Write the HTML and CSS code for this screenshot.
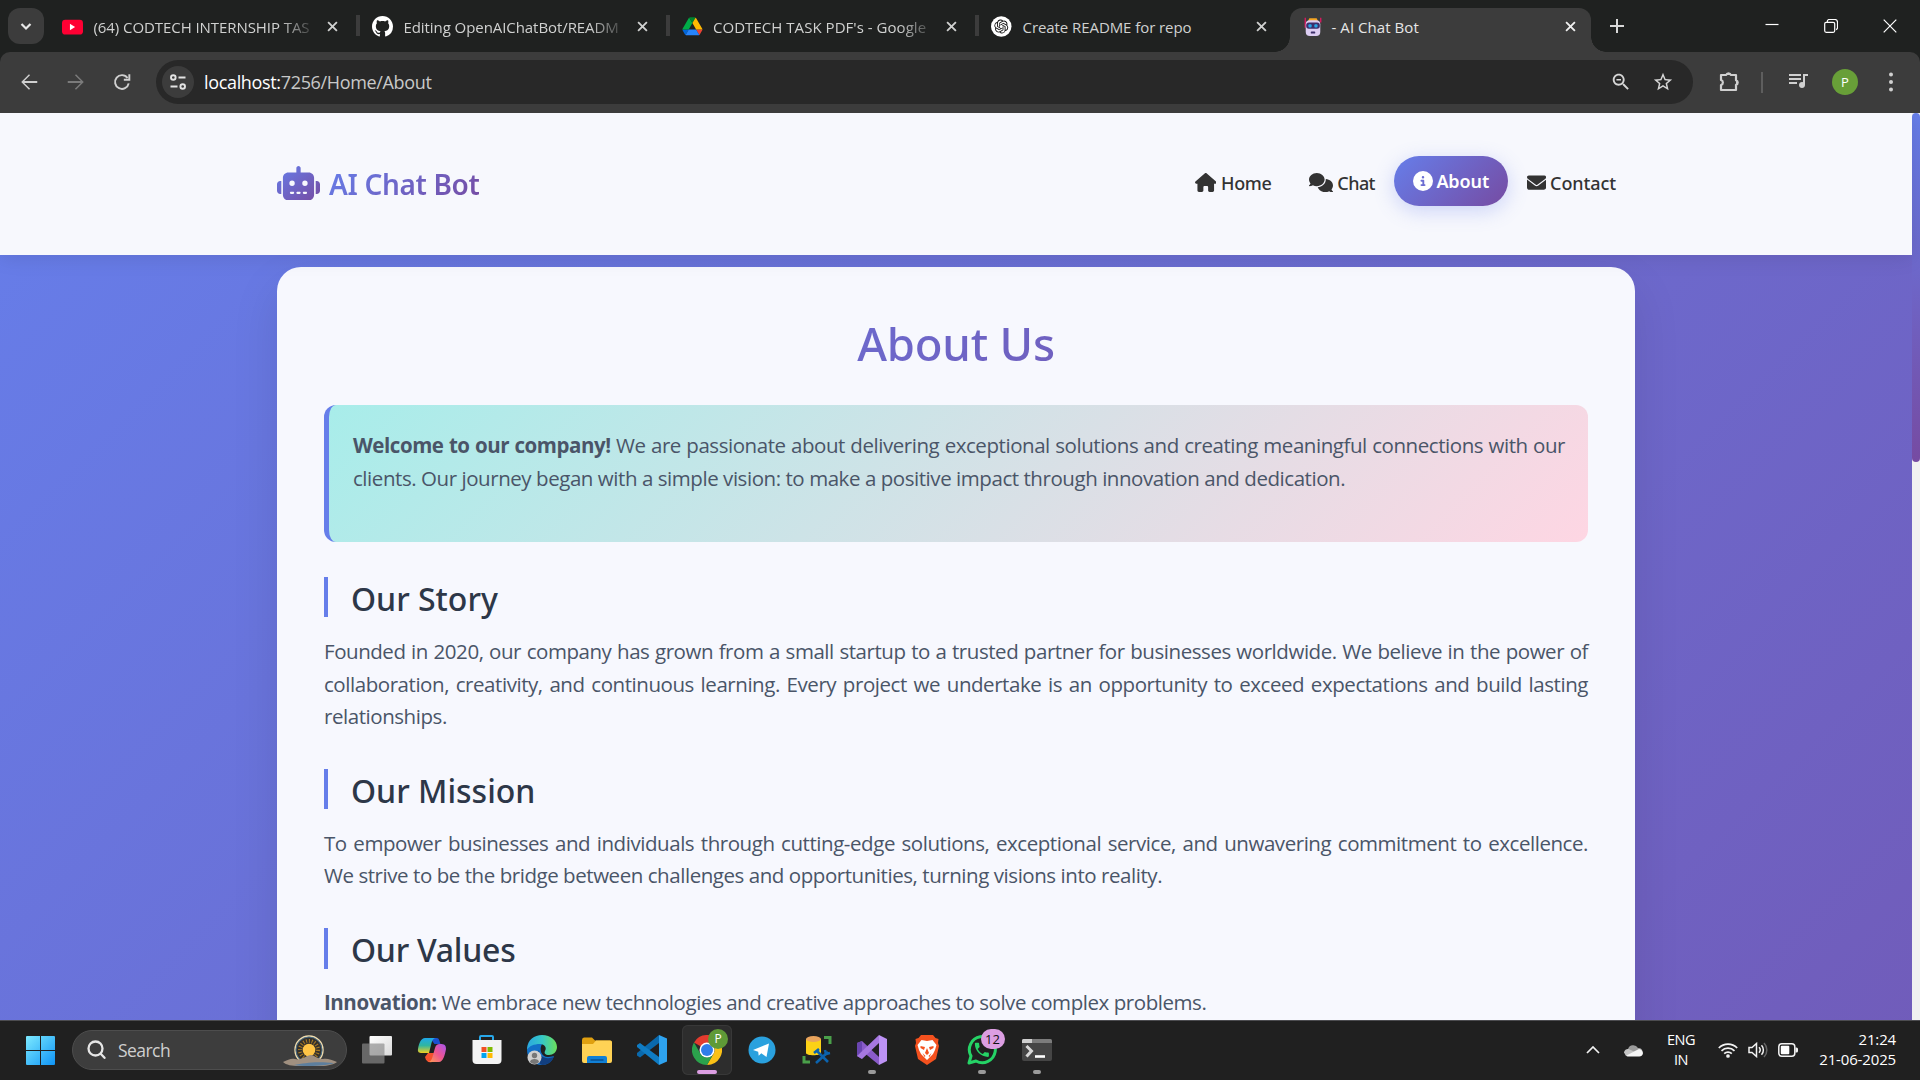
FILE: index.html
```html
<!DOCTYPE html>
<html lang="en">
<head>
<meta charset="utf-8">
<title>- AI Chat Bot</title>
<link rel="stylesheet" href="styles.css">
</head>
<body>
<div class="screen">

<header class="tabstrip">
  <button class="tab-search"><svg width="36" height="36" viewBox="0 0 36 36"><path d="M13.500 16l4.500 4.500 4.500-4.500" fill="none" stroke="#e8e8e8" stroke-width="2.200"/></svg></button>
  <div class="tabs">
    <div class="tab">
      <svg class="fav" viewBox="0 0 22 22"><rect x="0" y="4" width="22" height="15.500" rx="3.500" fill="#ff0033"/><path d="M8.300 8.200l5.400 3.300-5.400 3.300z" fill="#fff"/></svg>
      <span class="tab-title fade">(64) CODTECH INTERNSHIP TAS</span>
      <svg class="close" viewBox="0 0 12 12"><path d="M1.200 1.200l9.600 9.600M10.800 1.200l-9.600 9.600"/></svg>
    </div>
    <div class="tab">
      <svg class="fav" viewBox="0 0 16 16"><path fill="#fff" d="M8 0C3.580 0 0 3.580 0 8c0 3.540 2.290 6.530 5.470 7.590.4.070.55-.17.55-.38 0-.19-.01-.82-.01-1.490-2.010.37-2.530-.49-2.690-.94-.09-.23-.48-.94-.82-1.130-.28-.15-.68-.52-.01-.53.63-.01 1.080.58 1.230.82.72 1.210 1.870.87 2.330.66.07-.52.28-.87.51-1.070-1.780-.2-3.640-.89-3.640-3.950 0-.87.31-1.590.82-2.150-.08-.2-.36-1.020.08-2.120 0 0 .67-.21 2.200.82.64-.18 1.320-.27 2-.27s1.360.09 2 .27c1.530-1.040 2.200-.82 2.200-.82.44 1.100.16 1.920.08 2.120.51.56.82 1.270.82 2.150 0 3.070-1.870 3.750-3.650 3.950.29.25.54.73.54 1.480 0 1.070-.01 1.930-.01 2.200 0 .21.15.46.55.38A8.010 8.010 0 0 0 16 8c0-4.420-3.580-8-8-8z"/></svg>
      <span class="tab-title fade">Editing OpenAIChatBot/READM</span>
      <svg class="close" viewBox="0 0 12 12"><path d="M1.200 1.200l9.600 9.600M10.800 1.200l-9.600 9.600"/></svg>
    </div>
    <div class="tab third">
      <svg class="fav" viewBox="-2 -6 92 92"><path d="m6.600 66.850 3.850 6.650c.8 1.400 1.950 2.500 3.300 3.300l13.750-23.800h-27.500c0 1.550.4 3.100 1.200 4.500z" fill="#0066da"/><path d="m43.650 25-13.750-23.800c-1.350.8-2.500 1.900-3.300 3.300l-25.400 44a9.060 9.060 0 0 0 -1.200 4.500h27.500z" fill="#00ac47"/><path d="m73.550 76.800c1.350-.8 2.500-1.900 3.300-3.300l1.600-2.750 7.650-13.250c.8-1.400 1.200-2.950 1.200-4.500h-27.502l5.852 11.500z" fill="#ea4335"/><path d="m43.650 25 13.750-23.800c-1.350-.8-2.900-1.200-4.500-1.200h-18.500c-1.600 0-3.150.45-4.500 1.200z" fill="#00832d"/><path d="m59.800 53h-32.300l-13.750 23.800c1.350.8 2.900 1.200 4.500 1.200h50.800c1.600 0 3.150-.45 4.500-1.200z" fill="#2684fc"/><path d="m73.400 26.500-12.700-22c-.8-1.400-1.950-2.500-3.300-3.300l-13.750 23.800 16.150 28h27.450c0-1.550-.4-3.100-1.200-4.500z" fill="#ffba00"/></svg>
      <span class="tab-title fade drive">CODTECH TASK PDF's - Google</span>
      <svg class="close" viewBox="0 0 12 12"><path d="M1.200 1.200l9.600 9.600M10.800 1.200l-9.600 9.600"/></svg>
    </div>
    <div class="tab last">
      <svg class="fav" viewBox="0 0 42 42"><circle cx="20.500" cy="21" r="20.500" fill="#fff"/><g transform="translate(6.500 7) scale(1.170)"><path fill="#111" d="M22.282 9.821a5.985 5.985 0 0 0-.516-4.911 6.046 6.046 0 0 0-6.510-2.900A6.065 6.065 0 0 0 4.981 4.182a5.985 5.985 0 0 0-3.998 2.900 6.046 6.046 0 0 0 .743 7.097 5.980 5.980 0 0 0 .511 4.911 6.051 6.051 0 0 0 6.515 2.900A5.985 5.985 0 0 0 13.260 24a6.056 6.056 0 0 0 5.772-4.206 5.989 5.989 0 0 0 3.998-2.900 6.056 6.056 0 0 0-.748-7.073zm-9.022 12.608a4.476 4.476 0 0 1-2.876-1.041l.142-.080 4.778-2.758a.795.795 0 0 0 .393-.681v-6.737l2.020 1.169a.071.071 0 0 1 .038.052v5.583a4.504 4.504 0 0 1-4.495 4.493zm-9.661-4.125a4.471 4.471 0 0 1-.535-3.014l.142.085 4.783 2.758a.771.771 0 0 0 .781 0l5.843-3.369v2.332a.080.080 0 0 1-.033.062L9.740 19.950a4.499 4.499 0 0 1-6.141-1.646zM2.341 7.896a4.485 4.485 0 0 1 2.366-1.973V11.600a.766.766 0 0 0 .388.677l5.814 3.354-2.020 1.169a.076.076 0 0 1-.071 0l-4.830-2.787A4.504 4.504 0 0 1 2.341 7.872zm16.596 3.856L13.104 8.364 15.119 7.200a.076.076 0 0 1 .071 0l4.830 2.791a4.494 4.494 0 0 1-.677 8.104v-5.677a.790.790 0 0 0-.407-.667zm2.011-3.023l-.142-.085-4.774-2.782a.776.776 0 0 0-.785 0L9.409 9.230V6.897a.066.066 0 0 1 .028-.062l4.830-2.787a4.499 4.499 0 0 1 6.680 4.660zM8.307 12.863l-2.020-1.164a.080.080 0 0 1-.038-.057V6.074a4.499 4.499 0 0 1 7.376-3.454l-.142.081L8.704 5.459a.795.795 0 0 0-.393.681zm1.098-2.365l2.602-1.500 2.607 1.500v2.999l-2.597 1.500-2.607-1.500Z"/></g></svg>
      <span class="tab-title">Create README for repo</span>
      <svg class="close" viewBox="0 0 12 12"><path d="M1.200 1.200l9.600 9.600M10.800 1.200l-9.600 9.600"/></svg>
    </div>
    <div class="tab active">
      <svg class="fav" viewBox="0 0 22 22"><path d="M2.500 1.500v11M19.500 1.500v5" stroke="#d81b60" stroke-width="1.500"/><path d="M7 2h8l1.500 3h-11z" fill="#f5a623"/><rect x="3" y="4" width="16" height="17.500" rx="4.500" fill="#dccdf2"/><rect x="3.500" y="6.500" width="15" height="7" rx="3" fill="#3d2f6b"/><rect x="6" y="8.500" width="3.500" height="3.500" rx="1" fill="#29a6e6"/><rect x="12.500" y="8.500" width="3.500" height="3.500" rx="1" fill="#29a6e6"/><rect x="8.500" y="16.500" width="5" height="2.300" rx="1" fill="#3d2f6b"/></svg>
      <span class="tab-title">- AI Chat Bot</span>
      <svg class="close" viewBox="0 0 12 12"><path d="M1.200 1.200l9.600 9.600M10.800 1.200l-9.600 9.600"/></svg>
    </div>
  </div>
  <svg class="new-tab" viewBox="0 0 14 14"><path d="M7 0v14M0 7h14"/></svg>
  <div class="window-buttons">
    <svg viewBox="0 0 14 14"><path d="M.5 5.500h13"/></svg>
    <svg viewBox="0 0 14 14"><rect x=".7" y="3.300" width="10" height="10" rx="1.500"/><path d="M3.300 3.300V2.500a2 2 0 0 1 2-2h5.500a2.700 2.700 0 0 1 2.700 2.700v5.500a2 2 0 0 1-1.500 1.900"/></svg>
    <svg viewBox="0 0 14 14"><path d="M.7.700l12.600 12.600M13.300.700L.7 13.300"/></svg>
  </div>
</header>

<nav class="toolbar">
  <div class="nav-buttons">
    <svg viewBox="0 0 24 24"><path fill="#d0d0d0" d="M21 11H6.800l6.300-6.300L12 3.500l-8.500 8.500 8.500 8.500 1.200-1.200L6.800 13H21z"/></svg>
    <svg viewBox="0 0 24 24"><path fill="#7b7b7b" d="M3 11h14.200l-6.300-6.300L12 3.500l8.500 8.500-8.500 8.500-1.200-1.200 6.400-6.300H3z"/></svg>
    <svg viewBox="0 0 24 24"><path fill="none" stroke="#d0d0d0" stroke-width="2.100" d="M19.300 13.500A7.500 7.500 0 1 1 18 7.600M20 3.500v6h-6"/></svg>
  </div>
  <div class="omnibox">
    <span class="site-info"><svg width="18" height="18" viewBox="0 0 18 18" fill="none" stroke="#e3e3e3" stroke-width="1.900"><circle cx="4.300" cy="4.500" r="2.300"/><path d="M9.500 4.500h7M1.500 13.500h7"/><circle cx="13.700" cy="13.500" r="2.300"/></svg></span>
    <span class="url"><b>localhost:</b>7256/Home/About</span>
    <svg class="ob-icon" viewBox="0 0 24 24"><path d="M15.500 14h-.79l-.28-.27C15.410 12.590 16 11.110 16 9.500 16 5.910 13.090 3 9.500 3S3 5.910 3 9.500 5.910 16 9.500 16c1.610 0 3.090-.59 4.230-1.570l.27.28v.79l5 4.990L20.490 19l-4.990-5zm-6 0C7.010 14 5 11.990 5 9.500S7.010 5 9.500 5 14 7.010 14 9.500 11.990 14 9.500 14zM7 8.700h5v1.600H7z"/></svg>
    <svg class="ob-icon" viewBox="0 0 24 24"><path d="M22 9.240l-7.190-.62L12 2 9.190 8.630 2 9.240l5.460 4.730L5.820 21 12 17.270 18.180 21l-1.630-7.030L22 9.240zM12 15.400l-3.760 2.270 1-4.280-3.320-2.880 4.380-.38L12 6.100l1.710 4.040 4.380.38-3.320 2.880 1 4.280L12 15.400z"/></svg>
  </div>
  <svg class="ext" width="24" height="24" viewBox="0 0 24 24"><path d="M4 5h5.200a2.400 2.400 0 0 1 4.600 0H19v5.200a2.400 2.400 0 0 1 0 4.600V20H4v-5a2.600 2.600 0 0 0 0-5z" fill="none" stroke="#d0d0d0" stroke-width="2.200" stroke-linejoin="round"/><path d="M9.500 5a2 2 0 0 1 4 0zM19 10.500a2 2 0 0 1 0 4z" fill="#d0d0d0"/></svg>
  <i class="bar-sep"></i>
  <svg class="queue" width="24" height="24" viewBox="0 0 24 24"><path fill="#d0d0d0" d="M15 4H3v1.900h12zm0 4H3v1.900h12zM3 13.900h8V12H3zM17 4v8.200c-.3-.1-.6-.2-1-.2-1.700 0-3 1.300-3 3s1.300 3 3 3 3-1.300 3-3V6h3V4z"/></svg>
  <span class="avatar">P</span>
  <svg class="dots" width="6" height="20" viewBox="0 0 6 20"><circle cx="3" cy="2.500" r="2"/><circle cx="3" cy="10" r="2"/><circle cx="3" cy="17.500" r="2"/></svg>
</nav>

<div class="viewport">
  <div class="page">
    <div class="site-header">
      <div class="container">
        <div class="logo">
          <svg width="43" height="34.400" viewBox="0 0 640 512"><defs><linearGradient id="lg" x1="0" y1="0" x2="1" y2="1"><stop offset="0" stop-color="#667eea"/><stop offset="1" stop-color="#764ba2"/></linearGradient></defs><path fill="url(#lg)" d="M320 0c17.700 0 32 14.300 32 32V96H472c44.200 0 80 35.800 80 80V432c0 44.200-35.800 80-80 80H168c-44.200 0-80-35.800-80-80V176c0-44.200 35.800-80 80-80H288V32c0-17.700 14.300-32 32-32zM208 384c-8.800 0-16 7.200-16 16s7.200 16 16 16h32c8.800 0 16-7.200 16-16s-7.200-16-16-16H208zm96 0c-8.800 0-16 7.200-16 16s7.200 16 16 16h32c8.800 0 16-7.200 16-16s-7.200-16-16-16H304zm96 0c-8.800 0-16 7.200-16 16s7.200 16 16 16h32c8.800 0 16-7.200 16-16s-7.200-16-16-16H400zM264 256a40 40 0 1 0 -80 0 40 40 0 1 0 80 0zm152 40a40 40 0 1 0 0-80 40 40 0 1 0 0 80zM48 224H64V416H48c-26.500 0-48-21.500-48-48V272c0-26.500 21.500-48 48-48zm544 0c26.500 0 48 21.500 48 48v96c0 26.500-21.500 48-48 48H576V224h16z"/></svg>
          <span>AI Chat Bot</span>
        </div>
        <ul class="menu">
          <li class="home"><svg width="21.500" height="19" viewBox="0 0 576 512"><path d="M575.800 255.500c0 18-15 32.100-32 32.100h-32l.7 160.200c0 2.700-.2 5.400-.5 8.100V472c0 22.100-17.900 40-40 40H456c-1.100 0-2.200 0-3.300-.1c-1.400 .1-2.800 .1-4.200 .1H416 392c-22.100 0-40-17.900-40-40V448 384c0-17.700-14.300-32-32-32H256c-17.700 0-32 14.300-32 32v64 24c0 22.100-17.900 40-40 40H160 128.100c-1.500 0-3-.1-4.500-.2c-1.200 .1-2.400 .2-3.600 .2H104c-22.100 0-40-17.900-40-40V360c0-.9 0-1.900 .1-2.800V287.600H32c-18 0-32-14-32-32.100c0-9 3-17 10-24L266.400 8c7-7 15-8 22-8s15 2 21 7L564.800 231.500c8 7 12 15 11 24z"/></svg>Home</li>
          <li class="chat"><svg width="24" height="19.200" viewBox="0 0 640 512"><path d="M208 352c114.900 0 208-78.800 208-176S322.900 0 208 0S0 78.800 0 176c0 38.600 14.700 74.300 39.600 103.400c-3.500 9.400-8.700 17.700-14.200 24.700c-4.800 6.200-9.700 11-13.300 14.300c-1.800 1.600-3.300 2.900-4.300 3.700c-.5 .4-.9 .7-1.100 .8l-.2 .2C1 327.200-1.400 334.400 .8 340.900S9.100 352 16 352c21.800 0 43.800-5.600 62.100-12.500c9.200-3.500 17.800-7.400 25.300-11.400C134.100 343.300 169.800 352 208 352zM448 176c0 112.300-99.100 196.900-216.500 207C255.800 457.400 336.400 512 432 512c38.200 0 73.900-8.700 104.700-23.900c7.500 4 16 7.900 25.200 11.400c18.300 6.900 40.300 12.500 62.100 12.500c6.900 0 13.100-4.500 15.200-11.100c2.100-6.600-.2-13.800-5.800-17.900l-.2-.2c-.2-.2-.6-.4-1.100-.8c-1-.8-2.500-2-4.300-3.700c-3.600-3.300-8.500-8.100-13.300-14.300c-5.500-7-10.700-15.400-14.200-24.700c24.900-29 39.600-64.700 39.600-103.400c0-92.800-84.900-168.900-192.600-175.500c.4 5.100 .6 10.300 .6 15.500z"/></svg>Chat</li>
          <li class="current"><svg width="20" height="20" viewBox="0 0 512 512"><path d="M256 512A256 256 0 1 0 256 0a256 256 0 1 0 0 512zM216 336h24V272H216c-13.300 0-24-10.700-24-24s10.700-24 24-24h48c13.300 0 24 10.700 24 24v88h8c13.300 0 24 10.700 24 24s-10.700 24-24 24H216c-13.300 0-24-10.700-24-24s10.700-24 24-24zm40-208a32 32 0 1 1 0 64 32 32 0 1 1 0-64z"/></svg>About</li>
          <li class="contact"><svg width="19.200" height="19.200" viewBox="0 0 512 512"><path d="M48 64C21.500 64 0 85.500 0 112c0 15.100 7.100 29.300 19.200 38.400L236.800 313.600c11.400 8.500 27 8.500 38.400 0L492.800 150.400c12.100-9.100 19.200-23.300 19.200-38.400c0-26.500-21.500-48-48-48H48zM0 176V384c0 35.300 28.700 64 64 64H448c35.300 0 64-28.700 64-64V176L294.400 339.200c-22.800 17.100-54 17.100-76.800 0L0 176z"/></svg>Contact</li>
        </ul>
      </div>
    </div>
    <main class="card">
      <h1>About Us</h1>
      <div class="intro">
        <p class="full"><strong>Welcome to our company!</strong> We are passionate about delivering exceptional solutions and creating meaningful connections with our</p>
        <p>clients. Our journey began with a simple vision: to make a positive impact through innovation and dedication.</p>
      </div>
      <h2>Our Story</h2>
      <div class="para">
        <p class="full">Founded in 2020, our company has grown from a small startup to a trusted partner for businesses worldwide. We believe in the power of</p>
        <p class="full">collaboration, creativity, and continuous learning. Every project we undertake is an opportunity to exceed expectations and build lasting</p>
        <p>relationships.</p>
      </div>
      <h2>Our Mission</h2>
      <div class="para">
        <p class="full">To empower businesses and individuals through cutting-edge solutions, exceptional service, and unwavering commitment to excellence.</p>
        <p>We strive to be the bridge between challenges and opportunities, turning visions into reality.</p>
      </div>
      <h2 class="values">Our Values</h2>
      <div class="para">
        <p><strong>Innovation:</strong> We embrace new technologies and creative approaches to solve complex problems.</p>
      </div>
    </main>
  </div>
  <div class="scrollbar"><i></i></div>
</div>

<footer class="taskbar">
  <svg class="start" width="29" height="29" viewBox="0 0 29 29"><defs><linearGradient id="w" gradientUnits="userSpaceOnUse" x1="0" y1="0" x2="29" y2="29"><stop offset="0" stop-color="#7deaff"/><stop offset="1" stop-color="#0f94f5"/></linearGradient></defs><path fill="url(#w)" d="M0 1a1 1 0 0 1 1-1h13v14H0zM15 0h13a1 1 0 0 1 1 1v13H15zM0 15h14v14H1a1 1 0 0 1-1-1zM15 15h14v13a1 1 0 0 1-1 1H15z"/></svg>
  <div class="search">
    <svg width="19" height="20" viewBox="0 0 19 20" fill="none" stroke="#e6e6e6" stroke-width="2.300" stroke-linecap="round"><circle cx="8.500" cy="8.500" r="7"/><path d="M13.700 13.800l3.800 4"/></svg>
    <span>Search</span>
    <svg class="weather" width="56" height="34" viewBox="0 0 56 34"><circle cx="27" cy="17" r="14" fill="#33302c" stroke="#f0dcae" stroke-width="1.400"/><circle cx="27" cy="17" r="13" fill="none" stroke="#4f7fa0" stroke-width=".8"/><circle cx="27" cy="17" r="9" fill="none" stroke="#a87a24" stroke-width="4" stroke-dasharray="1 1.800"/><circle cx="27" cy="17" r="6.300" fill="#ffc445"/><path d="M1 29c5-2 8-4 12-3s4 0 8-1 6-5 11-2c3 2 6 3 9 3 4-1 9 1 14 3-2 2-9 4-16 4H17C10 33 4 32 1 29z" fill="#a09080"/><path d="M12 32c10-2 22-4 40-2-6 3-30 4-40 2z" fill="#5d7f9e"/></svg>
  </div>
  <div class="apps">
    <div class="app"><svg width="30" height="30" viewBox="0 0 30 30"><defs><linearGradient id="tv" x2="1" y2="1"><stop offset="0" stop-color="#fff"/><stop offset="1" stop-color="#d9d9d9"/></linearGradient></defs><rect x="7.500" y="1" width="22.500" height="19.500" rx="1" fill="url(#tv)"/><rect x="0" y="8.500" width="22.500" height="20" rx="1" fill="#8a8a8a" fill-opacity=".68"/></svg></div>
    <div class="app"><svg width="30" height="30" viewBox="0 0 30 30"><defs><linearGradient id="c1" x1="0" y1="0" x2="0" y2="1"><stop offset="0" stop-color="#1ea8ea"/><stop offset=".5" stop-color="#30b6a0"/><stop offset="1" stop-color="#f0cf20"/></linearGradient><linearGradient id="c2" x1="1" y1="0" x2="0" y2="1"><stop offset="0" stop-color="#a855f0"/><stop offset=".5" stop-color="#ee5590"/><stop offset="1" stop-color="#ffa04d"/></linearGradient></defs><path d="M13 3h7c2 0 2.500 3 3.500 6h-6z" fill="#1a4fd0"/><path d="M8 3h11c-3 0-4 3-5 7l-2 8H5c-3 0-4.500-1-4-4C2 8 4 3 8 3z" fill="url(#c1)"/><path d="M8 22l3-4h6l-2 9c-4 1-6-1-7-5z" fill="#f5512e"/><path d="M23 9c4.500 0 6 1 6 5-1 6-3 13-7 13H11c3 0 4-3 5-7l2-7c1-3 2-4 5-4z" fill="url(#c2)"/></svg></div>
    <div class="app"><svg width="30" height="30" viewBox="0 0 30 30"><path d="M8 7V2q0-1 1-1h11q1 0 1 1v5" fill="none" stroke="#28a8ea" stroke-width="2"/><path d="M.5 5h29v20q0 4-4 4H4.500q-4 0-4-4z" fill="#f3f3f3"/><path d="M9.500 12h5v5h-5z" fill="#f25022"/><path d="M15.500 12h5v5h-5z" fill="#7fba00"/><path d="M9.500 18h5v5h-5z" fill="#00a4ef"/><path d="M15.500 18h5v5h-5z" fill="#ffb900"/></svg></div>
    <div class="app"><svg width="30" height="30" viewBox="0 0 30 30"><defs><linearGradient id="e1"><stop offset="0" stop-color="#2aa7e0"/><stop offset=".5" stop-color="#35c8c8"/><stop offset="1" stop-color="#6ce05a"/></linearGradient></defs><path d="M0 15C2 8 10 7 15 9c-3 5-1 13 6 13 3 0 5-1 6-1-2 6-7 9-12 9C6 30 0 23 0 15z" fill="#1270c8"/><path d="M0 13C1 5 7 0 15 0c9 0 15 6 15 12 0 5-4 8-8 8-4 0-5-2-4-4 2-3 0-7-5-7C7 9 2 11 0 15z" fill="url(#e1)"/><path d="M12 15c0 7 7 10 15 7-3 6-7 8-12 8-6-2-6-10-3-15z" fill="#123f80"/><circle cx="7.500" cy="22.500" r="7" fill="#cfcfcf"/><circle cx="7.500" cy="20.500" r="2.700" fill="#777"/><path d="M3 27c0-4 9-4 9 0-2 2.500-7 2.500-9 0z" fill="#777"/></svg></div>
    <div class="app"><svg width="30" height="30" viewBox="0 0 30 30"><path d="M0 5q0-2.500 2-2.500h8l3 3h15q2 0 2 2V14H0z" fill="#e0a010"/><path d="M0 9h11l3-3.500h14q2 0 2 2V26q0 2-2 2H2q-2 0-2-2z" fill="#ffd255"/><path d="M5 28v-5q0-2 2-2h16q2 0 2 2v5z" fill="#1180d6"/><path d="M8.500 25h13" stroke="#0a4c8c" stroke-width="1.400"/></svg></div>
    <div class="app"><svg width="30" height="30" viewBox="0 0 30 30"><path d="M22 0v8L3 22.500 0 20.500V18z" fill="#0a69ac"/><path d="M0 12v-2l3-2 19 14v8z" fill="#0f7cc4"/><path d="M22 0l8 3.500v23L22 30z" fill="#2ea3f0"/></svg></div>
    <div class="app running focused"><svg width="30" height="30" viewBox="0 0 30 30"><path d="M15 15L2 7.500A15 15 0 0 1 28 7.500H15z" fill="#e33b2e"/><path d="M28 7.500A15 15 0 0 1 15 30l6.500-11.200A7.500 7.500 0 0 0 15 7.500z" fill="#fbc116"/><path d="M15 30A15 15 0 0 1 2 7.500l6.500 11.300A7.500 7.500 0 0 0 21.500 18.800z" fill="#2ba24c"/><circle cx="15" cy="15" r="7.500" fill="#fff"/><circle cx="15" cy="15" r="6" fill="#2f7de9"/></svg><span class="badge profile">P</span></div>
    <div class="app"><svg width="30" height="30" viewBox="0 0 30 30"><circle cx="15" cy="15" r="13.500" fill="#2aa1de"/><path d="M6 15l16-6.500-2.500 13.500-5.200-3.800-2.600 2.600-.5-4z" fill="#fff"/></svg></div>
    <div class="app"><svg width="30" height="30" viewBox="0 0 30 30"><path d="M4 4v14c0 3 15 3 15 0V4z" fill="#fcd116"/><ellipse cx="11.500" cy="4" rx="7.500" ry="3" fill="#e9a45c"/><path d="M22 2.500h6V9M8 27H2v-6" fill="none" stroke="#4aa04a" stroke-width="3"/><path d="M15 16l11 11M26 17L14 28" stroke="#0b63ae" stroke-width="2.600"/><path d="M12 18l5-4M23 15l1 4 4-1" fill="none" stroke="#0b63ae" stroke-width="2.600"/></svg></div>
    <div class="app running"><svg width="30" height="30" viewBox="0 0 30 30"><path d="M0 8l5-2 17 16v8L5 16l-5 5z" fill="#8a5bc9"/><path d="M0 8l5-2v18l-5-3z" fill="#6a45b0"/><path d="M22 0v8L5 24l-5-3z" fill="#a678e0"/><path d="M22 0l8 4v22l-8 4z" fill="#bd92f5"/></svg></div>
    <div class="app"><svg width="30" height="30" viewBox="0 0 30 30"><path d="M9 0h12l2.500 3 3 1-.5 4 1 3-3 13L15 30 6 24l-3-13 1-3-.5-4 3-1z" fill="#f4511e"/><path d="M9.500 5l5.500 1 5.500-1 4 5-1.500 5-2 4-6 6-6-6-2-4-1.500-5z" fill="#fff"/><path d="M8.500 11l4.500 1-1 3-3.500-2zM21.500 11l-4.500 1 1 3 3.500-2zM15 13l2 5-2 2-2-2zM10.500 18l3 3-1 1zM19.500 18l-3 3 1 1z" fill="#f4511e"/></svg></div>
    <div class="app running"><svg width="30" height="30" viewBox="0 0 30 30"><path d="M2 28l2-7A13 13 0 1 1 9 26z" fill="none" stroke="#25d366" stroke-width="3" stroke-linejoin="round"/><path transform="translate(5.500 5.500) scale(.78)" fill="#25d366" d="M6.620 10.790c1.440 2.830 3.760 5.140 6.590 6.590l2.200-2.200c.27-.27.67-.36 1.020-.24 1.120.37 2.330.57 3.570.57.55 0 1 .45 1 1V20c0 .55-.45 1-1 1-9.390 0-17-7.610-17-17 0-.55.45-1 1-1h3.500c.55 0 1 .45 1 1 0 1.250.2 2.450.57 3.570.11.35.03.74-.25 1.020z"/></svg><span class="badge count">12</span></div>
    <div class="app running"><svg width="30" height="30" viewBox="0 0 30 30"><path d="M0 5.500q0-1.500 1.500-1.500h27q1.500 0 1.500 1.500V8H0z" fill="#7c7c7c"/><path d="M0 5.500q0-1.500 1.500-1.500H10v4H0z" fill="#cfcfcf"/><path d="M0 8h30v16q0 2-2 2H2q-2 0-2-2z" fill="#454545"/><path d="M4.500 11l5 5-5 5.500" fill="none" stroke="#d8d8d8" stroke-width="3"/><path d="M13 21.500h10" stroke="#fff" stroke-width="2.600"/></svg></div>
  </div>
  <div class="tray">
    <svg class="chev" width="14" height="8" viewBox="0 0 14 8"><path d="M1 7l6-6 6 6" fill="none" stroke="#f2f2f2" stroke-width="1.700"/></svg>
    <svg class="cloud" width="20" height="14" viewBox="0 0 20 14"><path d="M5 6a5.500 5.500 0 0 1 10-1 4 4 0 0 1 1 8H4.500A4 4 0 0 1 5 6z" fill="#9b9b9b"/><path d="M1 9.500A4 4 0 0 1 5.500 6l6.500 3-9 4z" fill="#c4c4c4"/><path d="M3 12.800L12 8l4-2a4.200 4.200 0 0 1 3.800 5c-.5 1.500-1.500 2.500-3.500 2.500H4.500z" fill="#f6f6f6"/></svg>
    <div class="lang">ENG<br>IN</div>
    <svg class="wifi" width="20" height="16" viewBox="0 0 20 16" fill="none" stroke="#f2f2f2" stroke-width="1.700"><path d="M.8 6a13 13 0 0 1 18.400 0M3.500 8.900a9.200 9.200 0 0 1 13 0M6.200 11.600a5.400 5.400 0 0 1 7.600 0"/><circle cx="10" cy="14" r="1" fill="#f2f2f2"/></svg>
    <svg class="vol" width="21" height="16" viewBox="0 0 21 16" fill="none" stroke="#f2f2f2" stroke-width="1.500"><path d="M1 5.500h3L8.500 1.500v13L4 10.500H1z"/><path d="M11 5.300a4 4 0 0 1 0 5.400M13.500 3.200a7 7 0 0 1 0 9.600"/><path d="M16 1a10 10 0 0 1 0 14" stroke="#666"/></svg>
    <svg class="bat" width="20" height="14" viewBox="0 0 20 14"><rect x=".8" y=".8" width="16" height="12.400" rx="3" fill="none" stroke="#f2f2f2" stroke-width="1.500"/><rect x="2.800" y="2.800" width="8.500" height="8.400" rx="1" fill="#fff"/><path d="M17.500 4.500h1q1.500 0 1.500 1.500v2q0 1.500-1.500 1.500h-1z" fill="#f2f2f2"/></svg>
    <div class="clock">21:24<br>21-06-2025</div>
  </div>
</footer>

</div>
</body>
</html>
```
FILE: styles.css
```css
* { box-sizing: border-box; margin: 0; padding: 0; }
body { width: 1920px; height: 1080px; overflow: hidden; font-family: "Open Sans", "Noto Sans", sans-serif; }
svg { display: block; flex: none; }
.screen { display: grid; grid-template-rows: 52px 61px 907px 60px; width: 1920px; height: 1080px; background: #1f2120; }

/* Browser tab strip */
.tabstrip { display: flex; align-items: flex-start; color: #d0d1d0; }
.tab-search { width: 36px; height: 36px; margin: 8px 6px 0 8px; border: 0; border-radius: 12px; background: #3c3c3c; }
.tabs { display: flex; height: 52px; }
.tab { display: flex; align-items: center; width: 310px; padding: 0 22px 8px 12px; font-size: 15px; white-space: nowrap; border-right: 4px solid; border-image: linear-gradient(transparent 15px, #3c3c3c 15px, #3c3c3c 36px, transparent 36px) 1; }
.fav { width: 21px; height: 21px; margin: 8px 10.500px 0 0; }
.tab-title { flex: 1; height: 22px; margin-top: 10px; line-height: 22px; letter-spacing: -.07px; }
.tab-title.drive { letter-spacing: .04px; }
.tab-title.fade { -webkit-mask-image: linear-gradient(90deg, #000 186px, transparent 224px); mask-image: linear-gradient(90deg, #000 186px, transparent 224px); margin-right: 6px; }
.close { width: 11px; height: 11px; margin: 8px 0 0 4px; fill: none; stroke: #d0d1d0; stroke-width: 2; }
.tab:not(.active) .close { margin-right: -4px; }
.tab.third { width: 309px; padding-left: 11.500px; }
.tab.last { width: 311px; padding-right: 27px; border-right: 0; }
.tab.active { position: relative; width: 301px; height: 44px; margin-top: 8px; padding: 0 15px 8px 13px; border: 0; border-radius: 12px 12px 0 0; background: #3c3c3c; color: #e6e6e6; }
.tab.active .fav { width: 20px; height: 21px; margin: 0 8.500px 0 0; }
.tab.active .tab-title { margin-top: 2px; letter-spacing: .06px; }
.tab.active .close { margin: 0 0 0 4px; stroke: #f0f0f0; }
.tab.active::before, .tab.active::after { content: ""; position: absolute; bottom: 0; width: 15px; height: 15px; }
.tab.active::before { left: -15px; background: radial-gradient(circle at 0 0, transparent 14.500px, #3c3c3c 15px); }
.tab.active::after { right: -15px; background: radial-gradient(circle at 100% 0, transparent 14.500px, #3c3c3c 15px); }
.new-tab { width: 14px; height: 14px; margin: 19px 0 0 19px; fill: none; stroke: #d8d8d8; stroke-width: 2; }
.window-buttons { display: flex; gap: 45px; margin: 19px 23.500px 0 auto; fill: none; stroke: #fff; stroke-width: 1.200; }
.window-buttons svg { width: 14px; height: 14px; }

/* Browser toolbar */
.toolbar { display: flex; align-items: center; padding-bottom: 1px; border-radius: 10px 10px 0 0; background: #3c3c3c; }
.nav-buttons { display: flex; gap: 24.500px; margin-left: 18px; }
.nav-buttons svg { width: 22px; height: 22px; }
.omnibox { display: flex; align-items: center; width: 1537px; height: 44px; margin-left: 23px; padding: 0 19px 0 6px; border-radius: 22px; background: #282828; }
.site-info { display: grid; place-items: center; width: 32px; height: 32px; border-radius: 50%; background: #3c3c3c; }
.url { flex: 1; margin-left: 10px; color: #c8c8c8; font-size: 18px; letter-spacing: -.34px; line-height: 24px; }
.url b { color: #fff; font-weight: 400; }
.ob-icon { width: 22px; height: 22px; margin-left: 20px; fill: #d6d6d6; }
.ext { margin-left: 24px; }
.bar-sep { width: 2px; height: 21px; margin: 0 23px 0 20px; background: #5e5e5e; }
.queue { margin-right: 22px; }
.avatar { width: 26px; height: 26px; border-radius: 50%; background: #689f38; color: #fff; font-size: 13px; line-height: 26px; text-align: center; }
.dots { margin-left: 30px; fill: #d0d0d0; }

/* Page */
.viewport { display: flex; overflow: hidden; }
.page { width: 1912px; background: linear-gradient(135deg, #667eea 0%, #764ba2 100%) 0 0 / 1912px 2364px no-repeat; }
.scrollbar { width: 8px; background: #f1f1f1; }
.scrollbar i { display: block; height: 349px; border-radius: 5px; background: linear-gradient(#667eea, #764ba2); }
.site-header { position: relative; height: 142px; background: #f7f8fd; box-shadow: 0 2px 20px rgba(0, 0, 0, .1); }
.container { display: flex; justify-content: space-between; width: 1358px; margin-left: 277px; }
.logo { display: flex; gap: 9px; padding-top: 53px; }
.logo span { height: 40px; margin-top: -2.500px; background: linear-gradient(135deg, #667eea, #764ba2); -webkit-background-clip: text; background-clip: text; color: transparent; font: 600 28px/40px "Noto Sans", sans-serif; letter-spacing: -.35px; }
.menu { display: flex; margin-top: 43px; list-style: none; color: #333; font: 500 18px/50px "Noto Sans", sans-serif; }
.menu li { display: flex; align-items: center; gap: 5px; height: 50px; padding: 3px 19px 0 18.500px; letter-spacing: -.4px; }
.menu svg { fill: currentColor; }
.menu .chat { padding-left: 19px; gap: 4px; letter-spacing: -.6px; }
.menu .contact { gap: 4px; letter-spacing: -.1px; padding: 3px 19px 0; }
.menu .current { width: 114px; gap: 3.500px; padding: 0 0 1px 19px; border-radius: 25px; background: linear-gradient(135deg, #667eea, #764ba2); box-shadow: 0 5px 20px rgba(102, 126, 234, .3); color: #fff; font-weight: 600; letter-spacing: -.1px; }

.card { height: 1200px; width: 1358px; margin: 12px 0 0 277px; padding: 48px 47px; border-radius: 24px; background: #f7f8fe; box-shadow: 0 20px 48px rgba(0, 0, 0, .1); color: #4a5568; }
h1 { height: 57px; margin-bottom: 33px; background: linear-gradient(135deg, #667eea, #764ba2); -webkit-background-clip: text; background-clip: text; color: transparent; font: 500 45.500px/57px "Noto Sans", sans-serif; letter-spacing: -.2px; text-align: center; }
.intro { height: 137px; margin-bottom: 35px; padding: 24px 23px 0 24px; border-left: 5px solid #667eea; border-radius: 12px; background: linear-gradient(135deg, #a8edea, #fed6e3); }
p { height: 32.640px; font-size: 20.500px; letter-spacing: -.445px; line-height: 32.640px; white-space: nowrap; }
p.full { text-align: justify; text-align-last: justify; }
strong { font-weight: 700; letter-spacing: -.45px; }
h2 { height: 40px; margin-bottom: 18px; padding-left: 23px; border-left: 4px solid #667eea; color: #2d3748; font: 500 32px/43px "Noto Sans", sans-serif; letter-spacing: 0; }
h2.values { height: 41px; margin-bottom: 17px; letter-spacing: -.25px; }
.para { margin-bottom: 35.700px; }

/* Windows taskbar */
.taskbar { display: flex; align-items: center; padding-bottom: 1px; border-top: 1px solid #4c4c50; background: #202020; color: #fff; }
.start { margin-left: 26px; }
.search { display: flex; align-items: center; width: 275px; height: 40px; margin-left: 17px; padding-left: 14px; border: 1px solid #4d4d4d; border-radius: 20px; background: #3d3d3d; }
.search span { flex: 1; margin-left: 12px; color: #cfcfcf; font-size: 17.500px; letter-spacing: -.55px; }
.weather { margin-right: 8px; }
.apps { display: flex; margin-left: 2.500px; }
.app { position: relative; display: grid; place-items: center; width: 55px; height: 50px; }
.app.focused { width: 50px; margin: 0 2.500px; border-radius: 6px; background: #2d2d2d; box-shadow: inset 0 0 0 1px #383838; }
.app.running::after { content: ""; position: absolute; left: calc(50% - 4px); bottom: 1px; width: 8px; height: 4px; border-radius: 2px; background: #9a9a9a; }
.app.focused::after { left: calc(50% - 10px); width: 20px; background: #dc9ee2; }
.badge { position: absolute; top: 4px; border-radius: 10px; font-size: 12px; line-height: 20px; text-align: center; }
.profile { left: 26px; width: 20px; height: 20px; background: #5f9a37; color: #fff; }
.count { left: 26px; width: 24px; height: 20px; background: #dc9ee2; color: #111; font-size: 13px; }
.tray { display: flex; align-items: center; margin-left: auto; padding-right: 24px; font-size: 15px; line-height: 20px; }
.chev { margin-right: 23px; }
.lang { width: 30px; margin: -1px 22px 0 23px; font-size: 14.500px; letter-spacing: -.5px; text-align: center; }
.vol { margin: 0 9px 0 10px; }
.clock { width: 78px; margin: -2px 0 0 20px; letter-spacing: -.15px; text-align: right; }
```
